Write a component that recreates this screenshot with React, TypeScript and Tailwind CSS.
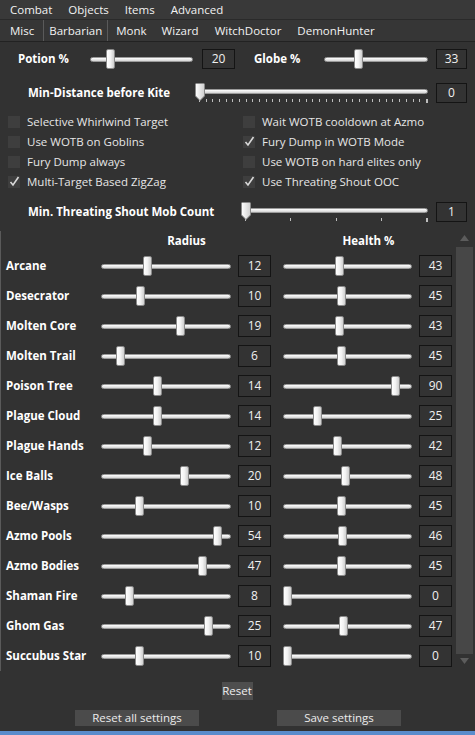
import React from 'react';

const font = { fontFamily: '"Open Sans", "Noto Sans", sans-serif' };

interface RowData {
  name: string;
  radius: number;
  radiusLeft: number;
  health: number;
}

const rows: RowData[] = [
  { name: 'Arcane', radius: 12, radiusLeft: 42, health: 43 },
  { name: 'Desecrator', radius: 10, radiusLeft: 35, health: 45 },
  { name: 'Molten Core', radius: 19, radiusLeft: 75, health: 43 },
  { name: 'Molten Trail', radius: 6, radiusLeft: 15, health: 45 },
  { name: 'Poison Tree', radius: 14, radiusLeft: 52, health: 90 },
  { name: 'Plague Cloud', radius: 14, radiusLeft: 52, health: 25 },
  { name: 'Plague Hands', radius: 12, radiusLeft: 42, health: 42 },
  { name: 'Ice Balls', radius: 20, radiusLeft: 79, health: 48 },
  { name: 'Bee/Wasps', radius: 10, radiusLeft: 34, health: 45 },
  { name: 'Azmo Pools', radius: 54, radiusLeft: 112, health: 46 },
  { name: 'Azmo Bodies', radius: 47, radiusLeft: 97, health: 45 },
  { name: 'Shaman Fire', radius: 8, radiusLeft: 24, health: 0 },
  { name: 'Ghom Gas', radius: 25, radiusLeft: 103, health: 47 },
  { name: 'Succubus Star', radius: 10, radiusLeft: 34, health: 0 },
];

const checks = [
  ['Selective Whirlwind Target', false, 'Wait WOTB cooldown at Azmo', false],
  ['Use WOTB on Goblins', false, 'Fury Dump in WOTB Mode', true],
  ['Fury Dump always', false, 'Use WOTB on hard elites only', false],
  ['Multi-Target Based ZigZag', true, 'Use Threating Shout OOC', true],
] as const;

function Track() {
  return (
    <div className="h-[5px] w-full rounded-full border border-[#9a9a9a] bg-gradient-to-b from-[#ffffff] to-[#d4d4d4]" />
  );
}

function Thumb({ left }: { left: number }) {
  return (
    <div
      className="absolute top-0 h-[20px] w-[9px] rounded-[2px] border border-[#8a8a8a] bg-gradient-to-r from-[#ffffff] via-[#f2f2f2] to-[#cfcfcf]"
      style={{ left }}
    />
  );
}

function Slider({ width, left }: { width: number; left: number }) {
  return (
    <div className="relative flex h-[20px] items-center" style={{ width }}>
      <Track />
      <Thumb left={left} />
    </div>
  );
}

function TickSlider({ width, ticks }: { width: number; ticks: number }) {
  return (
    <div className="relative h-[20px]" style={{ width }}>
      <div className="absolute left-0 right-0 top-[6px]">
        <Track />
      </div>
      <div className="absolute left-[4px] right-[0px] top-[16px] flex justify-between">
        {Array.from({ length: ticks }).map((_, i) => (
          <div
            key={i}
            className={i === ticks - 1 ? 'h-[4px] w-[2px] bg-[#bdbdbd]' : 'h-[3px] w-[1px] bg-[#bdbdbd]'}
          />
        ))}
      </div>
      <svg className="absolute left-0 top-0" width="10" height="18" viewBox="0 0 10 18">
        <defs>
          <linearGradient id="tg" x1="0" x2="1" y1="0" y2="0">
            <stop offset="0" stopColor="#ffffff" />
            <stop offset="1" stopColor="#cfcfcf" />
          </linearGradient>
        </defs>
        <path d="M0.5 1.5 Q0.5 0.5 1.5 0.5 H8.5 Q9.5 0.5 9.5 1.5 V13 L5 17.5 L0.5 13 Z" fill="url(#tg)" stroke="#8a8a8a" />
      </svg>
    </div>
  );
}

function ValueBox({ value, w = 33, h = 20 }: { value: number; w?: number; h?: number }) {
  return (
    <div
      className="flex items-center justify-center border border-[#141414] bg-[#333333] text-[12px] font-normal text-[#f0f0f0]"
      style={{ width: w, height: h }}
    >
      {value}
    </div>
  );
}

function CheckBox({ checked }: { checked: boolean }) {
  return (
    <div className="relative h-[12px] w-[12px] bg-[#3e3e3e]">
      {checked && (
        <svg className="absolute left-[1px] top-[0px]" width="11" height="11" viewBox="0 0 11 11">
          <path d="M1.5 6 L4 9 L9.5 1" fill="none" stroke="#d8d8d8" strokeWidth="1.6" />
        </svg>
      )}
    </div>
  );
}

function Button({ label, w }: { label: string; w: number }) {
  return (
    <div
      className="flex h-[16px] items-center justify-center bg-[#4b4b4b] text-[11.5px] text-[#ececec]"
      style={{ width: w }}
    >
      {label}
    </div>
  );
}

export default function App() {
  return (
    <div className="relative h-[735px] w-[475px] overflow-hidden bg-[#323232] text-[11.5px] text-white" style={font}>
      {/* menu */}
      <div className="flex h-[20px] items-center gap-[16px] border-b border-[#2a2a2a] bg-[#393939] pl-[10px] text-[#f2f2f2]">
        <span>Combat</span>
        <span>Objects</span>
        <span>Items</span>
        <span>Advanced</span>
      </div>
      {/* tabs */}
      <div className="flex h-[22px] items-center border-b border-[#222222] bg-[#363636] text-[#f2f2f2]">
        <span className="pl-[10px] pr-[9px]">Misc</span>
        <span className="flex h-full items-center border-x border-[#5a5a5a] px-[5px]">Barbarian</span>
        <span className="pl-[8px]">Monk</span>
        <span className="pl-[15px]">Wizard</span>
        <span className="pl-[16px]">WitchDoctor</span>
        <span className="pl-[16px]">DemonHunter</span>
      </div>

      {/* potion / globe */}
      <div className="mt-[7px] flex h-[20px] items-center font-bold">
        <span className="w-[90px] pl-[18px]">Potion %</span>
        <Slider width={103} left={16} />
        <div className="ml-[9px]">
          <ValueBox value={20} w={33} />
        </div>
        <span className="ml-[19px] w-[70px]">Globe %</span>
        <Slider width={104} left={30} />
        <div className="ml-[8px]">
          <ValueBox value={33} w={31} />
        </div>
      </div>

      {/* min distance */}
      <div className="mt-[14px] flex h-[20px] items-center font-bold">
        <span className="w-[195px] pl-[28px]">Min-Distance before Kite</span>
        <TickSlider width={233} ticks={35} />
        <div className="ml-[8px]">
          <ValueBox value={0} w={31} />
        </div>
      </div>

      {/* checkboxes */}
      <div className="mt-[9px] flex flex-col text-[#e6e6e6]">
        {checks.map(([a, ac, b, bc], i) => (
          <div key={i} className="flex h-[20px] items-center">
            <div className="flex w-[243px] items-center pl-[8px]">
              <CheckBox checked={ac} />
              <span className="ml-[7px]">{a}</span>
            </div>
            <div className="flex items-center">
              <CheckBox checked={bc} />
              <span className="ml-[7px]">{b}</span>
            </div>
          </div>
        ))}
      </div>

      {/* min threating */}
      <div className="mt-[10px] flex h-[20px] items-center font-bold">
        <span className="w-[241px] pl-[28px]">Min. Threating Shout Mob Count</span>
        <TickSlider width={187} ticks={5} />
        <div className="ml-[8px]">
          <ValueBox value={1} w={31} />
        </div>
      </div>

      {/* scroll panel */}
      <div className="mt-[9px] flex h-[440px] border-l border-[#5a5a5a]">
        <div className="w-[454px]">
          <div className="flex h-[20px] items-center font-bold">
            <span className="ml-[100px] w-[171px] text-center">Radius</span>
            <span className="ml-[12px] w-[169px] text-center">Health %</span>
          </div>
          {rows.map((r) => (
            <div key={r.name} className="flex h-[30px] items-center">
              <span className="w-[100px] pl-[5px] font-bold">{r.name}</span>
              <Slider width={130} left={r.radiusLeft} />
              <div className="ml-[7px]">
                <ValueBox value={r.radius} w={33} h={22} />
              </div>
              <div className="ml-[12px]">
                <Slider width={129} left={Math.round(r.health * 1.2)} />
              </div>
              <div className="ml-[7px]">
                <ValueBox value={r.health} w={33} h={22} />
              </div>
            </div>
          ))}
        </div>
        {/* scrollbar */}
        <div className="flex w-[18px] flex-col items-center pt-[4px]">
          <svg width="9" height="6" viewBox="0 0 9 6">
            <path d="M0 6 L4.5 0 L9 6 Z" fill="#5c5c5c" />
          </svg>
          <div className="mt-[6px] h-[407px] w-[17px] bg-[#474747]" />
          <svg className="mt-[4px]" width="9" height="6" viewBox="0 0 9 6">
            <path d="M0 0 L4.5 6 L9 0 Z" fill="#5c5c5c" />
          </svg>
        </div>
      </div>

      {/* buttons */}
      <div className="mt-[11px] flex justify-center pr-[1px]">
        <div className="flex h-[18px] w-[31px] items-center justify-center bg-[#4e4e4e] text-[#f0f0f0]">
          Reset
        </div>
      </div>
      <div className="mt-[10px] flex h-[16px] items-center">
        <div className="ml-[75px]">
          <Button label="Reset all settings" w={124} />
        </div>
        <div className="ml-[78px]">
          <Button label="Save settings" w={124} />
        </div>
      </div>
      <div className="absolute bottom-0 left-0 right-0 h-[4px] bg-[#5a8ccc]" />
    </div>
  );
}
